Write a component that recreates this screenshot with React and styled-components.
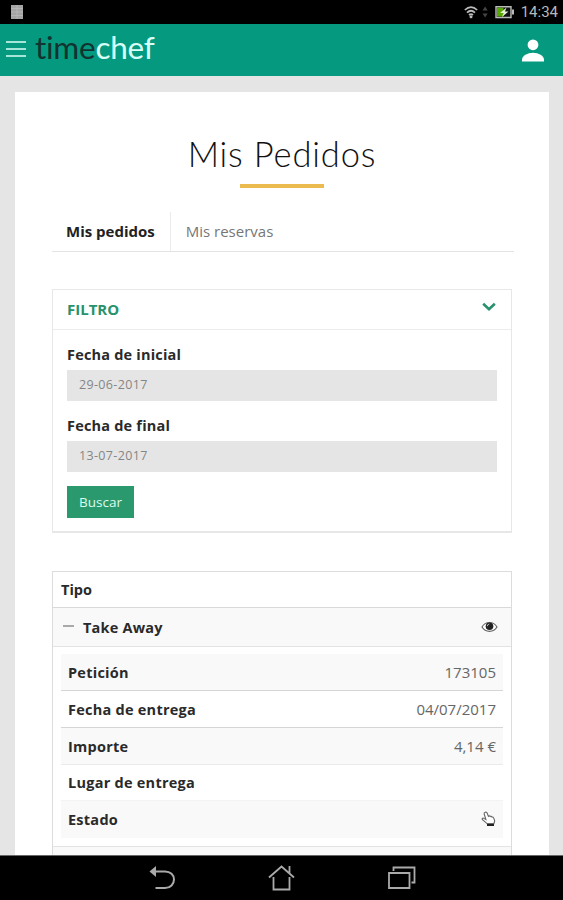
import styled, { createGlobalStyle } from 'styled-components'

const GlobalStyle = createGlobalStyle`
  * { box-sizing: border-box; }
  body {
    margin: 0;
    font-family: 'Open Sans', 'Noto Sans', sans-serif;
    color: #2a2a2a;
    background: #000;
  }
`;

const Screen = styled.div`
  display: flex;
  flex-direction: column;
  width: 563px;
  height: 900px;
  overflow: hidden;
`;

const StatusBar = styled.div`
  display: flex;
  align-items: center;
  height: 24px;
  padding: 0 5px 0 11px;
  background: #000;
`;

const StatusRight = styled.div`
  display: flex;
  align-items: center;
  margin-left: auto;
`;

const Clock = styled.span`
  margin-left: 7px;
  font-family: Roboto, sans-serif;
  font-size: 15px;
  line-height: 24px;
  color: #b9b9b9;
`;

const Header = styled.header`
  display: flex;
  align-items: center;
  height: 52px;
  padding: 0 19px 0 6px;
  background: #059a80;
`;

const Burger = styled.div`
  display: flex;
  flex-direction: column;
  gap: 5px;
  width: 20px;
  margin-right: 9px;
  margin-top: -2px;
`;

const BurgerLine = styled.span`
  height: 2px;
  background: #a5e6d9;
`;

const Logo = styled.div`
  margin-top: -7px;
  font-family: Lato, sans-serif;
  font-size: 31.5px;
  line-height: 40px;
  letter-spacing: -0.25px;
  color: #d8fff7;
`;

const LogoDark = styled.span`
  color: #12332f;
`;

const UserIcon = styled.svg`
  margin-left: auto;
`;

const Content = styled.main`
  flex: 1;
  min-height: 0;
  overflow: hidden;
  padding: 16px 14px 0 15px;
  background: #e5e5e5;
`;

const Sheet = styled.div`
  height: 763px;
  padding: 40px 37px 0;
  overflow: hidden;
  background: #fff;
`;

const Title = styled.h1`
  margin: 0;
  font-family: Lato, sans-serif;
  font-size: 34.5px;
  font-weight: 300;
  line-height: 44px;
  letter-spacing: 0.85px;
  text-align: center;
  white-space: nowrap;
  color: #111;
`;

const TitleRule = styled.div`
  width: 84px;
  height: 4px;
  margin: 8px auto 0;
  background: #ebbb50;
`;

const Tabs = styled.div`
  display: flex;
  height: 40px;
  margin: 24px -2px 0 0;
  border-bottom: 1px solid #e2e4e4;
`;

const Tab = styled.div`
  padding: ${({ $active }) => ($active ? '0 15px 0 14px' : '0 15px')};
  font-size: 15px;
  line-height: 39px;
  font-weight: ${({ $active }) => ($active ? 700 : 400)};
  color: ${({ $active }) => ($active ? '#222' : '#777')};
  border-right: ${({ $active }) => ($active ? '1px solid #ebebeb' : '0')};
`;

const Filter = styled.section`
  height: 244px;
  margin: 37px 0 0;
  border: 1px solid #e7e7e7;
  border-bottom-width: 2px;
`;

const FilterHead = styled.div`
  display: flex;
  align-items: center;
  justify-content: space-between;
  height: 40px;
  padding: 0 15px 2px 14px;
  border-bottom: 1px solid #ececec;
  font-size: 15px;
  font-weight: 700;
  color: #27926c;
`;

const FilterBody = styled.div`
  padding: 14px 14px 0;
`;

const Label = styled.label`
  display: block;
  height: 26px;
  font-size: 14.5px;
  font-weight: 700;
  line-height: 21px;
  letter-spacing: 0.2px;
`;

const DateBox = styled.div`
  height: 31px;
  margin-bottom: 14px;
  padding-left: 12px;
  font-size: 12.5px;
  line-height: 30px;
  letter-spacing: 0.35px;
  color: #858585;
  background: #e5e5e5;
`;

const Search = styled.button`
  display: block;
  width: 67px;
  height: 32px;
  padding: 0;
  border: 0;
  font-family: inherit;
  font-size: 13.5px;
  line-height: 30px;
  color: #dcfbee;
  background: #2a996d;
`;

const Orders = styled.section`
  margin-top: 38px;
  height: 300px;
  border: 1px solid #dcdcdc;
`;

const OrdersHead = styled.div`
  height: 36px;
  padding-left: 8px;
  border-bottom: 1px solid #d9d9d9;
  font-size: 14.5px;
  font-weight: 700;
  line-height: 35px;
`;

const OrderRow = styled.div`
  display: flex;
  align-items: center;
  height: 39px;
  padding: 0 13px 0 10px;
  border-bottom: 1px solid #e3e3e3;
  font-size: 14.5px;
  font-weight: 700;
  letter-spacing: 0.2px;
  background: #f9f9f9;

  svg { margin-left: auto; }
`;

const Dash = styled.span`
  width: 11px;
  height: 2px;
  margin: -2px 9px 0 0;
  background: #aaa;
`;

const Details = styled.div`
  padding: 7px 8px 8px;
  border-bottom: 1px solid #e3e3e3;
`;

const Detail = styled.div`
  display: flex;
  align-items: center;
  justify-content: space-between;
  height: ${({ $h }) => $h}px;
  padding: 0 7px;
  font-size: 14.5px;
  border-bottom: 1px solid ${({ $line }) => $line};
  background: ${({ $shade }) => ($shade ? '#f9f9f9' : '#fff')};
`;

const Name = styled.span`
  font-weight: 700;
  letter-spacing: 0.25px;
`;

const Value = styled.span`
  display: flex;
  font-size: 15px;
  color: #666;
`;

const NextRow = styled.div`
  height: 30px;
  background: #f9f9f9;
`;

const NavBar = styled.nav`
  display: flex;
  align-items: center;
  justify-content: center;
  gap: 92px;
  height: 45px;
  border-top: 1px solid #666;
  background: #000;
`;

const Chevron = styled.svg`
  margin-top: -3px;
`;

const ChevronDown = () => (
  <Chevron width="14" height="10" viewBox="0 0 14 10">
    <path d="M1.2 1.8 L7 7.2 L12.8 1.8" fill="none" stroke="#27926c" strokeWidth="2.6" />
  </Chevron>
);

const Eye = () => (
  <svg width="17" height="12" viewBox="0 0 17 12">
    <path d="M1 6C4.500 0 12.500 0 16 6 12.500 11.700 4.500 11.700 1 6z" fill="#fff" stroke="#666" strokeWidth="1.2" />
    <circle cx="8.5" cy="5.300" r="3.800" fill="#222" />
    <path d="M6.300 5.200a2.300 2.300 0 0 1 2-2.200" fill="none" stroke="#ccc" strokeWidth=".9" />
  </svg>
);

const Hand = () => (
  <svg width="15" height="16" viewBox="0 0 15 16">
    <path
      d="M4.200 1.300c.8-.5 1.600-.1 1.900.7L7.400 5.300c.6-.6 1.400-.5 1.800.2.700-.4 1.400-.2 1.700.5.800-.2 1.400.2 1.700.9l1 2.600c.2 1.200-.4 2-.8 3.300H6.300L1.200 8.500C.8 7.300 2 6.700 3 7.400l1.900 1.200L3.200 3c-.3-.8.200-1.400 1-1.700z"
      fill="#fff"
      stroke="#666"
      strokeWidth="1.1"
    />
    <path d="M6 12.700h7v2.300H6z" fill="#222" />
  </svg>
);

const rows = [
  { name: 'Petición', value: '173105', shade: true, h: 37, line: '#d5d5d5' },
  { name: 'Fecha de entrega', value: '04/07/2017', h: 37, line: '#d5d5d5' },
  { name: 'Importe', value: '4,14 €', shade: true, h: 37, line: '#eaeaea' },
  { name: 'Lugar de entrega', value: '', h: 36, line: '#f3f3f3' },
  { name: 'Estado', value: <Hand />, shade: true, h: 37, line: '#f9f9f9' },
];

function App() {
  return (
    <Screen>
      <GlobalStyle />
      <StatusBar>
        <svg width="12" height="14" viewBox="0 0 12 14">
          <path d="M0 0h12v14H0z" fill="#a4a4a4" />
          <path d="M6 0v14M0 3.5h12M0 7h12M0 10.5h12" stroke="#bdbdbd" strokeWidth=".7" />
        </svg>
        <StatusRight>
          <svg width="50" height="16" viewBox="0 0 50 16">
            <g fill="none" stroke="#bbb" strokeWidth="1.7">
              <path d="M.8 6Q7 .2 13.2 6" />
              <path d="M3 8.7Q7 4.8 11 8.7" />
              <path d="M5 11Q7 9.2 9 11" />
            </g>
            <circle cx="7" cy="12.8" r="1.5" fill="#bbb" />
            <path d="M18.500 6.500l2.600-4 2.600 4zM18.500 9.500l2.600 4 2.600-4z" fill="#444" />
            <path d="M32 2.7h15v10.8H32z" fill="#111" stroke="#bbb" strokeWidth="1.4" />
            <path d="M33 3.7h6.5v8.8H33z" fill="#58a600" />
            <path d="M48 5.5h2v5h-2z" fill="#bbb" />
            <path d="M42.5 3.5L36 9h3.5L38 13l6.5-5.5H41z" fill="#e2f0d4" />
          </svg>
          <Clock>14:34</Clock>
        </StatusRight>
      </StatusBar>

      <Header>
        <Burger>
          <BurgerLine />
          <BurgerLine />
          <BurgerLine />
        </Burger>
        <Logo><LogoDark>time</LogoDark>chef</Logo>
        <UserIcon width="22" height="23" viewBox="0 0 22 23">
          <circle cx="11" cy="5.8" r="5.4" fill="#fff" />
          <path d="M0 22.5v-1.8c0-4 5.5-7 11-7s11 3 11 7v1.8z" fill="#fff" />
        </UserIcon>
      </Header>

      <Content>
        <Sheet>
          <Title>Mis Pedidos</Title>
          <TitleRule />

          <Tabs>
            <Tab $active>Mis pedidos</Tab>
            <Tab>Mis reservas</Tab>
          </Tabs>

          <Filter>
            <FilterHead>
              FILTRO
              <ChevronDown />
            </FilterHead>
            <FilterBody>
              <Label>Fecha de inicial</Label>
              <DateBox>29-06-2017</DateBox>
              <Label>Fecha de final</Label>
              <DateBox>13-07-2017</DateBox>
              <Search>Buscar</Search>
            </FilterBody>
          </Filter>

          <Orders>
            <OrdersHead>Tipo</OrdersHead>
            <OrderRow>
              <Dash />
              Take Away
              <Eye />
            </OrderRow>
            <Details>
              {rows.map((row) => (
                <Detail key={row.name} $h={row.h} $line={row.line} $shade={row.shade}>
                  <Name>{row.name}</Name>
                  <Value>{row.value}</Value>
                </Detail>
              ))}
            </Details>
            <NextRow />
          </Orders>
        </Sheet>
      </Content>

      <NavBar>
        <svg width="28" height="26" viewBox="0 0 28 26">
          <path d="M7 6.5h10c5.500 0 9 3.500 9 8s-3.500 8.500-9 8.500H7.500" fill="none" stroke="#aaa" strokeWidth="2" />
          <path d="M1.500 6.500l6.500-5.500v11z" fill="#aaa" />
        </svg>
        <svg width="28" height="26" viewBox="0 0 28 26">
          <g fill="none" stroke="#aaa" strokeWidth="1.8">
            <path d="M1 12.500L13.500 1.500 26 12.500M21.500 8V1" />
            <path d="M5.500 12v12.500h16V12" />
          </g>
        </svg>
        <svg width="28" height="26" viewBox="0 0 28 26">
          <g fill="none" stroke="#aaa" strokeWidth="1.8">
            <path d="M1 8h20.500v15H1z" />
            <path d="M5.500 6V2.500h21v15h-3" />
          </g>
        </svg>
      </NavBar>
    </Screen>
  );
}

export default App;
